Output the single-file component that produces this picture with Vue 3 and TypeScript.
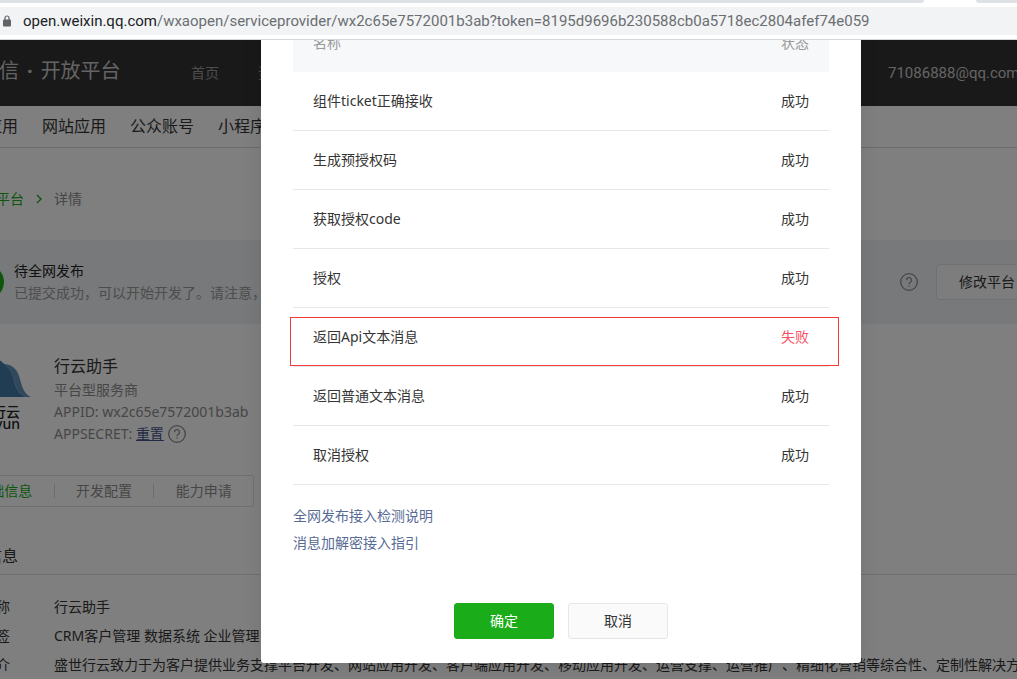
<script setup lang="ts">
interface CheckRow {
  name: string
  ok: boolean
}

const address = { host: 'open.weixin.qq.com', path: '/wxaopen/serviceprovider/wx2c65e7572001b3ab?token=8195d9696b230588cb0a5718ec2804afef74e059' }
const categories: string[] = ['移动应用', '网站应用', '公众账号', '小程序']
const tabs: string[] = ['基础信息', '开发配置', '能力申请']
const details = [
  { label: '平台名称', value: '行云助手' },
  { label: '平台标签', value: 'CRM客户管理 数据系统 企业管理' },
  { label: '平台简介', value: '盛世行云致力于为客户提供业务支撑平台开发、网站应用开发、客户端应用开发、移动应用开发、运营支撑、运营推广、精细化营销等综合性、定制性解决方案' },
]
const checks: CheckRow[] = [
  { name: '组件ticket正确接收', ok: true },
  { name: '生成预授权码', ok: true },
  { name: '获取授权code', ok: true },
  { name: '授权', ok: true },
  { name: '返回Api文本消息', ok: false },
  { name: '返回普通文本消息', ok: true },
  { name: '取消授权', ok: true },
]
const guides: string[] = ['全网发布接入检测说明', '消息加解密接入指引']
</script>

<template>
  <div class="browser">
    <div class="chrome">
      <div class="strip"><span class="strip-left"></span><span class="strip-right"></span></div>
      <div class="address">
        <svg class="lock" viewBox="0 0 8 12" width="8" height="12" aria-hidden="true">
          <path d="M2 5V3a2 2 0 0 1 4 0v2" fill="none" stroke="#5f6368" stroke-width="1.2" />
          <rect x="0" y="4.500" width="8" height="7" rx="1" fill="#5f6368" />
        </svg>
        <span class="url"><b>{{ address.host }}</b>{{ address.path }}</span>
      </div>
    </div>

    <div class="viewport">
      <div class="sheet">
        <header class="top">
          <span class="brand"><span>微信</span><b>·</b><span>开放平台</span></span>
          <nav class="top-nav"><a href="#">首页</a><a href="#">资源中心</a></nav>
          <span class="mail">71086888@qq.com</span>
        </header>
        <nav class="categories">
          <a v-for="c in categories" :key="c" href="#">{{ c }}</a>
        </nav>
        <main>
          <div class="crumbs">
            <a href="#">第三方平台</a>
            <svg viewBox="0 0 6 10" width="6" height="10" aria-hidden="true"><path d="M1 1l4 4-4 4" fill="none" stroke="#1aad19" stroke-width="1.4" /></svg>
            <span>详情</span>
          </div>
          <section class="banner">
            <span class="dot"></span>
            <div class="banner-text">
              <p class="strong">待全网发布</p>
              <p>已提交成功，可以开始开发了。请注意，</p>
            </div>
            <div class="banner-actions">
              <svg viewBox="0 0 18 18" width="18" height="18" aria-hidden="true">
                <circle cx="9" cy="9" r="8.300" fill="none" stroke="#8d8d8d" stroke-width="1.300" />
                <path d="M6.500 7.200a2.500 2.500 0 1 1 3.700 2.100c-.8.5-1.200.9-1.200 1.900M9 12.400v1.300" fill="none" stroke="#8d8d8d" stroke-width="1.200" />
              </svg>
              <button type="button" class="modify">修改平台</button>
            </div>
          </section>
          <section class="app">
            <div class="logo">
              <svg viewBox="0 0 77 38" width="77" height="38" aria-hidden="true">
                <path d="M0 38C12 34 12 16 24 5c7-6 17-9 25-1 6 4 9 9 11 17 2 9 5 14 12 17z" fill="#427aa8" />
                <path d="M50 5c5 3 8 9 10 16 2 9 5 14 12 17h5c-11-5-9-19-15-27-3-4-7-6-12-6z" fill="#6590b8" />
              </svg>
              <strong>行云</strong>
              <span>xingyun</span>
            </div>
            <div class="app-text">
              <h2>行云助手</h2>
              <p>平台型服务商</p>
              <p>APPID: wx2c65e7572001b3ab</p>
              <p class="secret">
                <span>APPSECRET: <a href="#">重置</a></span>
                <svg viewBox="0 0 18 18" width="18" height="18" aria-hidden="true">
                  <circle cx="9" cy="9" r="8.300" fill="none" stroke="#8d8d8d" stroke-width="1.300" />
                  <path d="M6.500 7.200a2.500 2.500 0 1 1 3.700 2.100c-.8.5-1.200.9-1.200 1.900M9 12.400v1.300" fill="none" stroke="#8d8d8d" stroke-width="1.200" />
                </svg>
              </p>
            </div>
          </section>
          <div class="tabs">
            <button v-for="(t, i) in tabs" :key="t" type="button" :class="{ active: i === 0 }">{{ t }}</button>
          </div>
          <h3>基本信息</h3>
          <dl>
            <div v-for="d in details" :key="d.label" class="detail">
              <dt>{{ d.label }}</dt>
              <dd>{{ d.value }}</dd>
            </div>
          </dl>
        </main>
      </div>

      <div class="mask">
        <div class="dialog" role="dialog" aria-label="全网发布接入检测">
          <table>
            <thead>
              <tr><th>名称</th><th>状态</th></tr>
            </thead>
            <tbody>
              <tr v-for="row in checks" :key="row.name" :class="{ failed: !row.ok }">
                <td>{{ row.name }}</td>
                <td>{{ row.ok ? '成功' : '失败' }}</td>
              </tr>
            </tbody>
          </table>
          <div class="guides">
            <a v-for="g in guides" :key="g" href="#">{{ g }}</a>
          </div>
          <div class="actions">
            <button type="button" class="primary">确定</button>
            <button type="button">取消</button>
          </div>
        </div>
      </div>
    </div>
  </div>
</template>

<style>
body {
  margin: 0;
}
</style>

<style scoped>
* {
  box-sizing: border-box;
}
.browser {
  display: flex;
  flex-direction: column;
  height: 100vh;
  overflow: hidden;
  font: 14px/22px "Noto Sans", "Noto Sans CJK SC", sans-serif;
  color: #353535;
}
p, h2, h3, dl, dd {
  margin: 0;
  font-weight: 400;
}
a {
  color: inherit;
  text-decoration: none;
}
button {
  font: inherit;
  color: inherit;
  padding: 0;
  border: 0;
  background: none;
}
.chrome {
  flex: none;
  height: 40px;
  border-bottom: 1px solid #d5d7da;
  background: #fff;
}
.strip {
  display: flex;
  justify-content: space-between;
  height: 3px;
}
.strip span {
  background: #dee1e6;
}
.strip-left {
  width: 924px;
  border-bottom-right-radius: 3px;
}
.strip-right {
  width: 41px;
  border-bottom-left-radius: 3px;
}
.address {
  display: flex;
  align-items: center;
  gap: 12px;
  height: 28px;
  margin-top: 4px;
  padding-left: 3px;
  background: #f1f3f4;
}
.lock {
  flex: none;
}
.url,
.mail {
  font-family: Roboto, sans-serif;
  font-size: 15px;
}
.url {
  color: #6b6e72;
  white-space: nowrap;
}
.url b {
  font-weight: 400;
  color: #202124;
}
.viewport {
  position: relative;
  flex: 1;
  min-height: 0;
  overflow: hidden;
}
.sheet {
  margin-left: -46px;
  background: #fff;
  white-space: nowrap;
}
.top {
  display: flex;
  align-items: center;
  height: 66px;
  background: #333;
  color: #c8c8c8;
}
.brand {
  display: flex;
  gap: 8px;
  width: 237px;
  padding-left: 25px;
  padding-bottom: 4px;
  font-size: 20px;
}
.top-nav {
  display: flex;
  flex: 1;
  gap: 39px;
  color: #999;
}
.mail {
  width: 129px;
}
.categories {
  display: flex;
  gap: 24px;
  height: 42px;
  border-bottom: 1px solid #d9d9d9;
  font-size: 16px;
  line-height: 41px;
}
.crumbs {
  display: flex;
  align-items: center;
  gap: 12px;
  height: 92px;
  padding-top: 10px;
  color: #8d8d8d;
}
.crumbs a {
  color: #1aad19;
}
.banner {
  display: flex;
  align-items: center;
  height: 84px;
  padding-left: 16px;
  background: #f0f3f7;
}
.dot {
  width: 34px;
  height: 34px;
  margin-right: 10px;
  border-radius: 50%;
  background: #1aad19;
}
.banner-text {
  flex: 1;
  color: #9a9a9a;
}
.strong {
  color: #222;
}
.banner-actions {
  display: flex;
  align-items: center;
  gap: 18px;
}
.modify {
  width: 81px;
  height: 36px;
  padding-left: 22px;
  border: 1px solid #e0e2e5;
  border-right: 0;
  border-radius: 4px 0 0 4px;
  background: #fafafa;
  text-align: left;
}
.app {
  display: flex;
  height: 151px;
  padding-top: 30px;
  color: #8d8d8d;
}
.logo {
  display: flex;
  flex-direction: column;
  width: 100px;
  padding-top: 5px;
  color: #222;
}
.logo svg {
  flex: none;
}
.logo strong,
.logo span {
  width: 66px;
  text-align: right;
  font-size: 14px;
  line-height: 12px;
}
.logo strong {
  padding-top: 9px;
  font-weight: 500;
}
.logo span {
  font-weight: 500;
}
.app h2 {
  line-height: 25px;
  font-size: 16px;
  color: #353535;
}
.secret {
  display: flex;
  align-items: center;
  gap: 4px;
}
.secret a {
  color: #44558f;
  text-decoration: underline;
}
.tabs {
  display: flex;
  width: 300px;
  height: 32px;
  border: 1px solid #e0e0e0;
  border-radius: 2px;
}
.tabs button {
  flex: 1;
  height: 14px;
  margin-top: 8px;
  line-height: 14px;
  color: #8d8d8d;
}
.tabs button + button {
  border-left: 1px solid #d9d9d9;
}
.tabs .active {
  color: #1aad19;
}
h3 {
  height: 68px;
  padding-top: 38px;
  border-bottom: 1px solid #e0e0e0;
  font-size: 16px;
}
dl {
  padding-top: 17px;
}
.detail {
  display: flex;
  height: 29px;
  line-height: 29px;
}
.detail dt {
  flex: none;
  width: 100px;
}
.mask {
  position: absolute;
  inset: 0;
  display: flex;
  justify-content: center;
  align-items: flex-end;
  padding: 0 0 16px 105px;
  background: rgba(0, 0, 0, 0.5);
}
.dialog {
  width: 600px;
  padding: 0 32px 24px;
  border-radius: 3px;
  background: #fff;
  box-shadow: 0 1px 20px rgba(0, 0, 0, 0.1);
}
table {
  width: 100%;
  border-collapse: separate;
  border-spacing: 0;
}
th {
  height: 58px;
  padding: 0 20px;
  background: #f6f8f9;
  font-weight: 400;
  text-align: left;
  color: #9a9a9a;
}
td {
  height: 59px;
  padding: 0 20px;
  border-bottom: 1px solid #e4e8eb;
}
th:last-child,
td:last-child {
  text-align: right;
}
.failed {
  position: relative;
}
.failed td:last-child {
  color: #fa5162;
}
.failed::after {
  content: "";
  position: absolute;
  inset: 9px -10px 1px -3px;
  border: 1px solid #f23a3a;
}
.guides {
  display: flex;
  flex-direction: column;
  padding-top: 17px;
  line-height: 27px;
  color: #576b95;
}
.actions {
  display: flex;
  justify-content: center;
  gap: 14px;
  padding-top: 47px;
}
.actions button {
  width: 100px;
  height: 36px;
  border: 1px solid #e4e8eb;
  border-radius: 3px;
  background: #fafafa;
}
.actions .primary {
  border-color: #1aad19;
  background: #1aad19;
  color: #fff;
}
</style>
